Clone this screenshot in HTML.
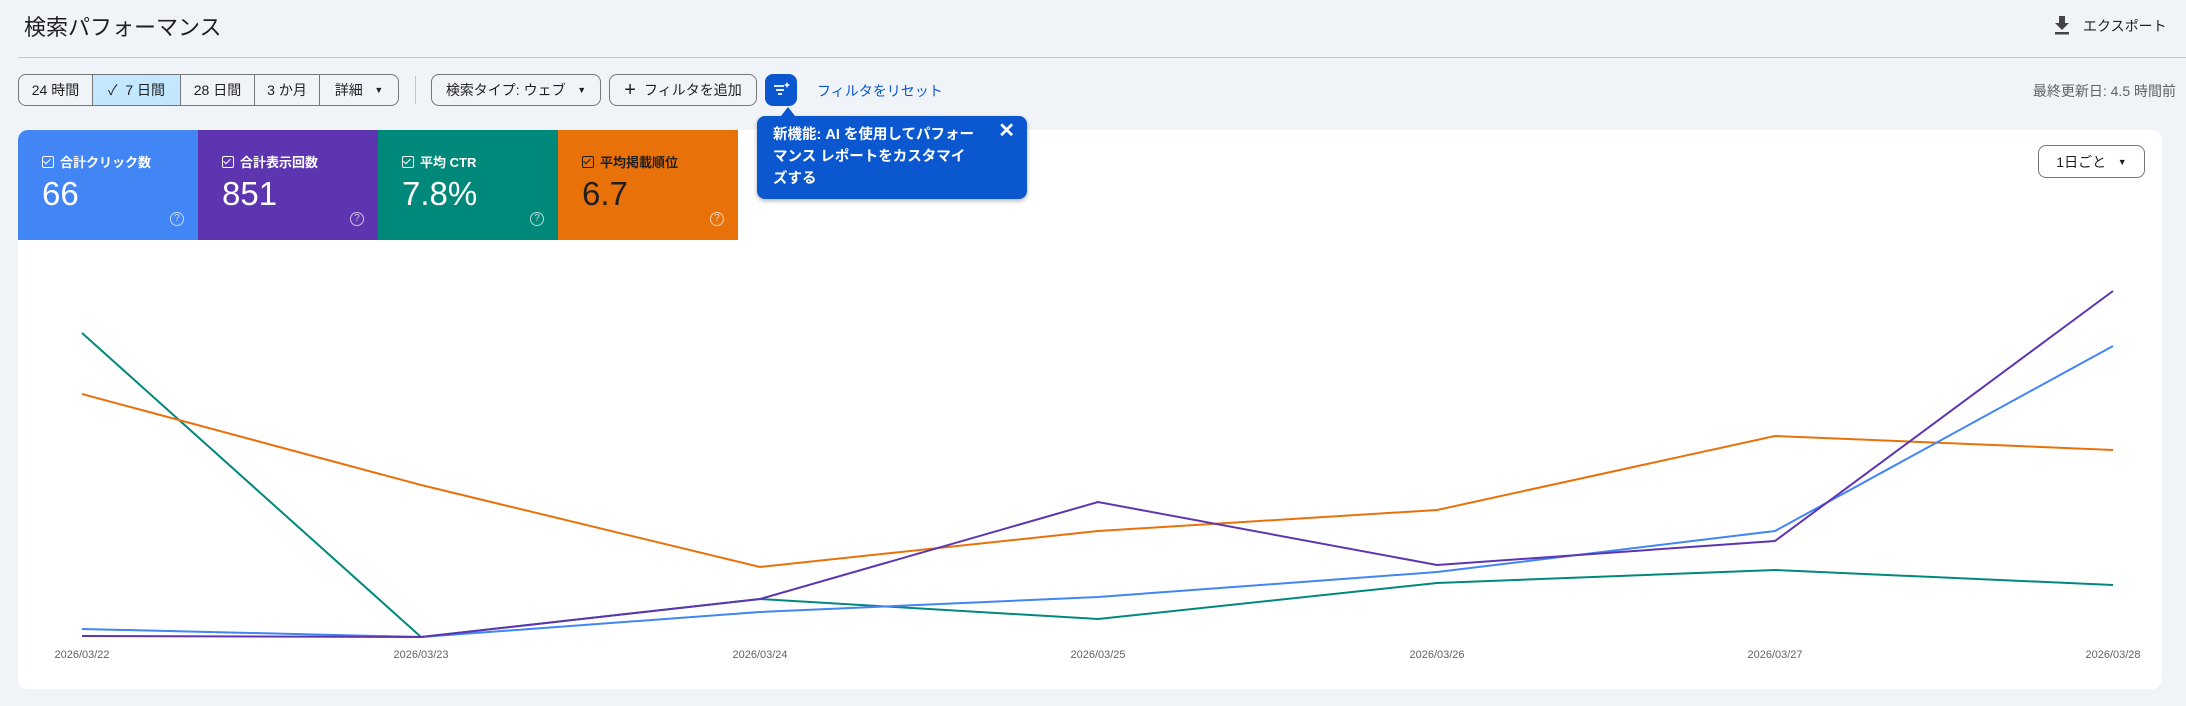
<!DOCTYPE html>
<html><head><meta charset="utf-8"><style>
*{box-sizing:border-box;margin:0;padding:0}
body{width:2186px;height:706px;background:#f0f4f9;font-family:"Liberation Sans","Noto Sans CJK JP",sans-serif;color:#1f1f1f;position:relative;overflow:hidden}
.abs{position:absolute}
.title{left:24px;top:10px;font-size:22px;color:#1f1f1f}
.hr{left:18px;right:0;top:57px;height:1px;background:#c4c7c5}
.btn{position:absolute;top:74px;height:32px;border:1px solid #747775;border-radius:8px;font-size:14px;display:flex;align-items:center;justify-content:center;color:#1f1f1f;background:#f0f4f9}
.seg{position:absolute;top:74px;height:32px;left:18px;width:381px;border:1px solid #747775;border-radius:8px;display:flex;overflow:hidden;font-size:14px}
.seg div{display:flex;align-items:center;justify-content:center;border-right:1px solid #747775;height:100%}
.seg div:last-child{border-right:none}
.card{left:18px;top:130px;width:2144px;height:559px;background:#fff;border-radius:10px;overflow:hidden}
.tile{position:absolute;top:0;width:180px;height:110px;color:#fff}
.tile .l{position:absolute;left:24px;top:22px;font-size:13px;font-weight:bold;display:flex;align-items:center;gap:6px}
.cb{width:12px;height:12px;border:1.5px solid currentColor;border-radius:2px;position:relative}
.cb:after{content:"";position:absolute;left:2px;top:0px;width:3px;height:6px;border:solid currentColor;border-width:0 1.5px 1.5px 0;transform:rotate(45deg)}
.tile .v{position:absolute;left:24px;top:45px;font-size:33px}
.tile .q{position:absolute;right:14px;top:82px;width:14px;height:14px;border:1px solid currentColor;border-radius:50%;font-size:10px;text-align:center;line-height:12px;opacity:.7}
.tip{left:757px;top:116px;width:270px;height:83px;background:#0b57d0;border-radius:8px;color:#fff;font-size:14.5px;font-weight:bold;line-height:22px;padding:8px 48px 0 16px;box-shadow:0 2px 4px rgba(0,0,0,.3)}
.ax{position:absolute;top:649px;font-size:11px;color:#5f6368;transform:translateX(-50%)}
</style></head><body>
<div class="abs title">検索パフォーマンス</div>
<div class="abs" style="left:2052px;top:14px;width:20px;height:22px">
<svg width="20" height="22" viewBox="0 0 20 22"><path d="M7 2h6v7h4l-7 7-7-7h4z" fill="#444"/><rect x="3" y="18" width="14" height="2.5" fill="#444"/></svg></div>
<div class="abs" style="left:2083px;top:16px;font-size:14px;color:#1f1f1f">エクスポート</div>
<div class="abs hr"></div>
<div class="seg">
<div style="width:74px">24 時間</div>
<div style="width:88px;background:#c2e7ff">✓&nbsp; 7 日間</div>
<div style="width:74px">28 日間</div>
<div style="width:65px">3 か月</div>
<div style="flex:1">詳細&nbsp;&nbsp;&nbsp;<span style="font-size:9px">▼</span></div>
</div>
<div class="abs" style="left:415px;top:76px;width:1px;height:28px;background:#c4c7c5"></div>
<div class="btn" style="left:431px;width:170px">検索タイプ: ウェブ&nbsp;&nbsp;&nbsp;<span style="font-size:9px">▼</span></div>
<div class="btn" style="left:609px;width:148px"><span style="font-size:20px;margin-right:8px">+</span>フィルタを追加</div>
<div class="abs" style="left:765px;top:74px;width:32px;height:32px;background:#0b57d0;border-radius:8px">
<svg width="32" height="32" viewBox="0 0 32 32"><path d="M9 12h10M11 16h8M13 20h4" stroke="#fff" stroke-width="1.8"/><path d="M22 8l1 2 2 1-2 1-1 2-1-2-2-1 2-1z" fill="#fff"/></svg></div>
<div class="abs" style="left:781px;top:107px;width:0;height:0;border-left:7px solid transparent;border-right:7px solid transparent;border-bottom:9px solid #0b57d0"></div>
<div class="abs" style="left:817px;top:81px;font-size:14px;color:#0b57d0">フィルタをリセット</div>
<div class="abs" style="right:10px;top:81px;font-size:14px;color:#5f6368">最終更新日: 4.5 時間前</div>
<div class="abs card">
<div class="tile" style="left:0;background:#4285f4"><div class="l"><span class="cb"></span>合計クリック数</div><div class="v">66</div><div class="q">?</div></div>
<div class="tile" style="left:180px;background:#5e35b1"><div class="l"><span class="cb"></span>合計表示回数</div><div class="v">851</div><div class="q">?</div></div>
<div class="tile" style="left:360px;background:#00897b"><div class="l"><span class="cb"></span>平均 CTR</div><div class="v">7.8%</div><div class="q">?</div></div>
<div class="tile" style="left:540px;background:#e8710a;color:#1f1f1f"><div class="l"><span class="cb"></span>平均掲載順位</div><div class="v">6.7</div><div class="q" style="color:#fff">?</div></div>
<div class="abs" style="left:2020px;top:15px;width:107px;height:33px;border:1px solid #747775;border-radius:8px;font-size:14px;display:flex;align-items:center;justify-content:center">1日ごと&nbsp;&nbsp;&nbsp;<span style="font-size:9px">▼</span></div>
</div>
<div class="abs tip">新機能: AI を使用してパフォー<br>マンス レポートをカスタマイ<br>ズする<div style="position:absolute;right:12px;top:4px;font-size:20px">✕</div></div>
<svg class="abs" style="left:0;top:0" width="2186" height="706">
<g fill="none" stroke-width="2">
<polyline stroke="#00897b" points="82,333 421,637 760,599 1098,619 1437,583 1775,570 2113,585"/>
<polyline stroke="#e8710a" points="82,394 421,485 760,567 1098,531 1437,510 1775,436 2113,450"/>
<polyline stroke="#4285f4" points="82,629 421,637 760,612 1098,597 1437,572 1775,531 2113,346"/>
<polyline stroke="#5e35b1" points="82,636 421,637 760,599 1098,502 1437,565 1775,541 2113,291"/>
</g></svg>
<div class="ax" style="left:82px">2026/03/22</div>
<div class="ax" style="left:421px">2026/03/23</div>
<div class="ax" style="left:760px">2026/03/24</div>
<div class="ax" style="left:1098px">2026/03/25</div>
<div class="ax" style="left:1437px">2026/03/26</div>
<div class="ax" style="left:1775px">2026/03/27</div>
<div class="ax" style="left:2113px">2026/03/28</div>
</body></html>
